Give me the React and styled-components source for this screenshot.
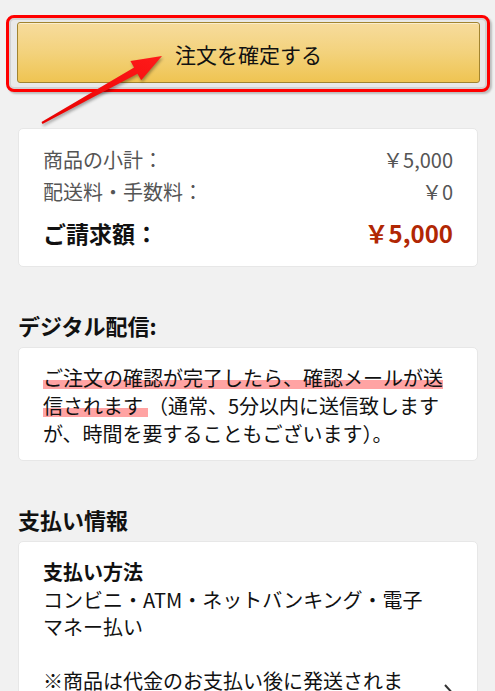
import React from 'react';
import styled, { createGlobalStyle } from 'styled-components';

const GlobalStyle = createGlobalStyle`
  html, body {
    margin: 0;
    padding: 0;
    background: #f1f1f1;
  }
  body {
    font-family: "Noto Sans CJK JP", "Noto Sans", sans-serif;
    color: #111;
  }
`;

const Page = styled.div`
  position: relative;
  padding: 15px 17px 40px 18px;
  overflow: hidden;
  height: 691px;
  box-sizing: border-box;
`;

const Highlight = styled.div`
  margin: 0 -12px 0 -12px;
  border: 3px solid #ff0000;
  border-radius: 8px;
  padding: 4px 7px 6px 8px;
  background: #e9e9e9;
  box-shadow: inset 0 0 0 2px #d2d2d2, 2px 2px 2px rgba(0, 0, 0, 0.22);
`;

const ConfirmButton = styled.button`
  display: block;
  width: 100%;
  height: 61px;
  border: 1px solid #a2842f;
  border-radius: 3px;
  background: linear-gradient(to bottom, #f7dc9d 0%, #f3d27c 50%, #efc452 100%);
  box-shadow: inset 0 1px 0 rgba(255, 255, 255, 0.5);
  font-family: inherit;
  font-size: 21px;
  color: #111;
  padding: 2px 0 0;
  cursor: pointer;
`;

const Card = styled.div`
  background: #fff;
  border: 1px solid #e7e7e7;
  border-radius: 5px;
  padding: ${p => p.$pad || '16px 24px'};
`;

const SummaryCard = styled(Card)`
  margin-top: 36px;
`;

const Row = styled.div`
  display: flex;
  justify-content: space-between;
  align-items: center;
  font-size: 20px;
  line-height: 30px;
  color: #555;
  margin-bottom: 2px;
`;

const TotalRow = styled(Row)`
  margin-top: 9px;
  margin-bottom: 0;
  line-height: 34px;
  color: #111;
  font-weight: 700;
  font-size: 23px;
`;

const TotalPrice = styled.span`
  color: #b12704;
  font-size: 24px;
`;

const SectionTitle = styled.h2`
  margin: 43px 0 7px;
  font-size: 22px;
  line-height: 30px;
  font-weight: 700;
  color: #111;
`;

const Body = styled.p`
  margin: 0;
  font-size: 20px;
  line-height: 28px;
  color: #111;
`;

const Marker = styled.span`
  padding-right: ${p => p.$extra || 0}px;
  background: linear-gradient(
    to bottom,
    transparent 60%,
    #ffa3a3 60%,
    #ffa3a3 88%,
    transparent 88%
  );
`;

const MethodTitle = styled.div`
  font-size: 20px;
  font-weight: 700;
  line-height: 28px;
`;

const MethodText = styled.div`
  font-size: 20px;
  line-height: 27px;
`;

const NoteRow = styled.div`
  display: flex;
  align-items: flex-start;
  margin-top: 27px;
`;

const NoteText = styled.div`
  flex: 1;
  font-size: 20px;
  line-height: 27px;
  margin-right: 30px;
`;

const Chevron = styled.svg`
  flex: none;
  margin-top: 17px;
  margin-right: -4px;
`;

const Arrow = styled.svg`
  position: absolute;
  left: 0;
  top: 0;
  pointer-events: none;
  filter: drop-shadow(1px 2px 1.5px rgba(0, 0, 0, 0.35));
`;

export default function App() {
  return (
    <>
      <GlobalStyle />
      <Page>
        <Highlight>
          <ConfirmButton>注文を確定する</ConfirmButton>
        </Highlight>

        <SummaryCard>
          <Row><span>商品の小計：</span><span>￥5,000</span></Row>
          <Row><span>配送料・手数料：</span><span>￥0</span></Row>
          <TotalRow><span>ご請求額：</span><TotalPrice>￥5,000</TotalPrice></TotalRow>
        </SummaryCard>

        <SectionTitle>デジタル配信:</SectionTitle>
        <Card $pad="16px 24px 12px">
          <Body>
            <Marker>ご注文の確認が完了したら、確認メールが送</Marker><br />
            <Marker $extra={5}>信されます</Marker>（通常、5分以内に送信致します<br />
            が、時間を要することもございます）。
          </Body>
        </Card>

        <SectionTitle>支払い情報</SectionTitle>
        <Card $pad="16px 24px 20px">
          <MethodTitle>支払い方法</MethodTitle>
          <MethodText>
            コンビニ・ATM・ネットバンキング・電子<br />
            マネー払い
          </MethodText>
          <NoteRow>
            <NoteText>※商品は代金のお支払い後に発送されます。</NoteText>
            <Chevron width="14" height="24" viewBox="0 0 14 24">
              <path d="M2 1 L12 12 L2 23" fill="none" stroke="#333" strokeWidth="2" />
            </Chevron>
          </NoteRow>
        </Card>

        <Arrow width="495" height="140" viewBox="0 0 495 140">
          <defs>
            <linearGradient id="arrowFill" x1="0" y1="1" x2="1" y2="0">
              <stop offset="0" stopColor="#e80000" />
              <stop offset="1" stopColor="#ff1a1a" />
            </linearGradient>
          </defs>
          <polygon
            points="41.5,122.1 134.1,67.5 130.4,61 162,56 141.2,80.2 137.5,73.7 42.5,123.9"
            fill="url(#arrowFill)"
          />
        </Arrow>
      </Page>
    </>
  );
}
